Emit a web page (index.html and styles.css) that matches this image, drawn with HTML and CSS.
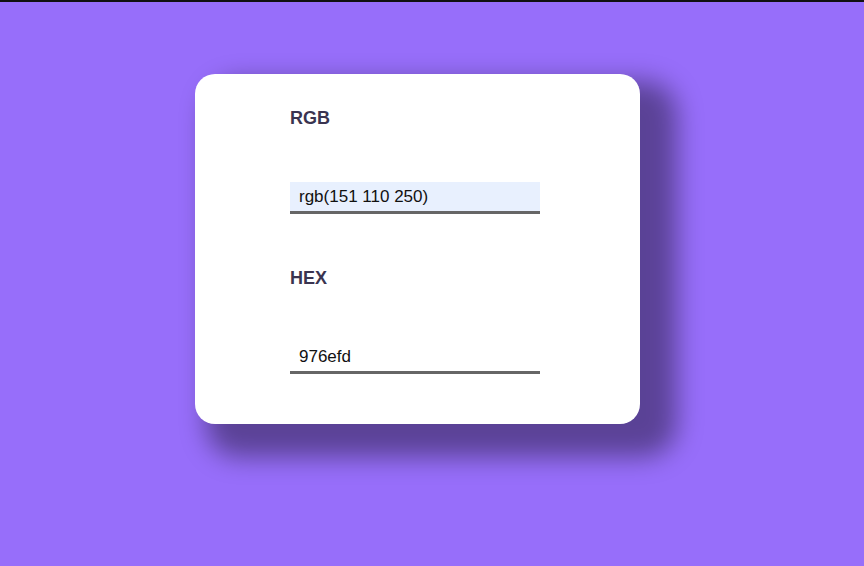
FILE: index.html
```html
<!DOCTYPE html>
<html>
<head>
<meta charset="utf-8">
<link rel="stylesheet" href="styles.css">
</head>
<body>
<div class="card">
  <label class="label" for="rgb">RGB</label>
  <input id="rgb" class="field field-filled" type="text" value="rgb(151 110 250)">
  <label class="label label-second" for="hex">HEX</label>
  <input id="hex" class="field" type="text" value="976efd" autofocus>
</div>
<script src="script.js"></script>
</body>
</html>
```
FILE: styles.css
```css
html, body {
  margin: 0;
  padding: 0;
}
body {
  background: #976efa;
  border-top: 2px solid #111;
  height: 564px;
  font-family: "Liberation Sans", Arial, sans-serif;
}
.card {
  box-sizing: border-box;
  width: 445px;
  height: 350px;
  margin: 72px 0 0 195px;
  background: #fff;
  border-radius: 20px;
  box-shadow: 24px 20px 26px 13px rgba(0, 0, 0, 0.4);
  padding: 34px 0 0 95px;
  display: flex;
  flex-direction: column;
  align-items: flex-start;
}
.label {
  font-size: 18px;
  font-weight: bold;
  line-height: 21px;
  color: #3a3450;
}
.label-second {
  margin-top: 54px;
}
.field {
  box-sizing: border-box;
  margin-top: 53px;
  width: 250px;
  height: 32px;
  border: none;
  border-bottom: 3px solid #666;
  background: transparent;
  padding: 1px 9px 0;
  font-family: "Liberation Sans", Arial, sans-serif;
  font-size: 17px;
  color: #111;
  caret-color: #111;
  outline: none;
}
.field-filled {
  background: #e8f0fe;
}
```
FILE: script.js
```js
var hex = document.getElementById('hex');
hex.focus();
hex.setSelectionRange(hex.value.length, hex.value.length);
```
